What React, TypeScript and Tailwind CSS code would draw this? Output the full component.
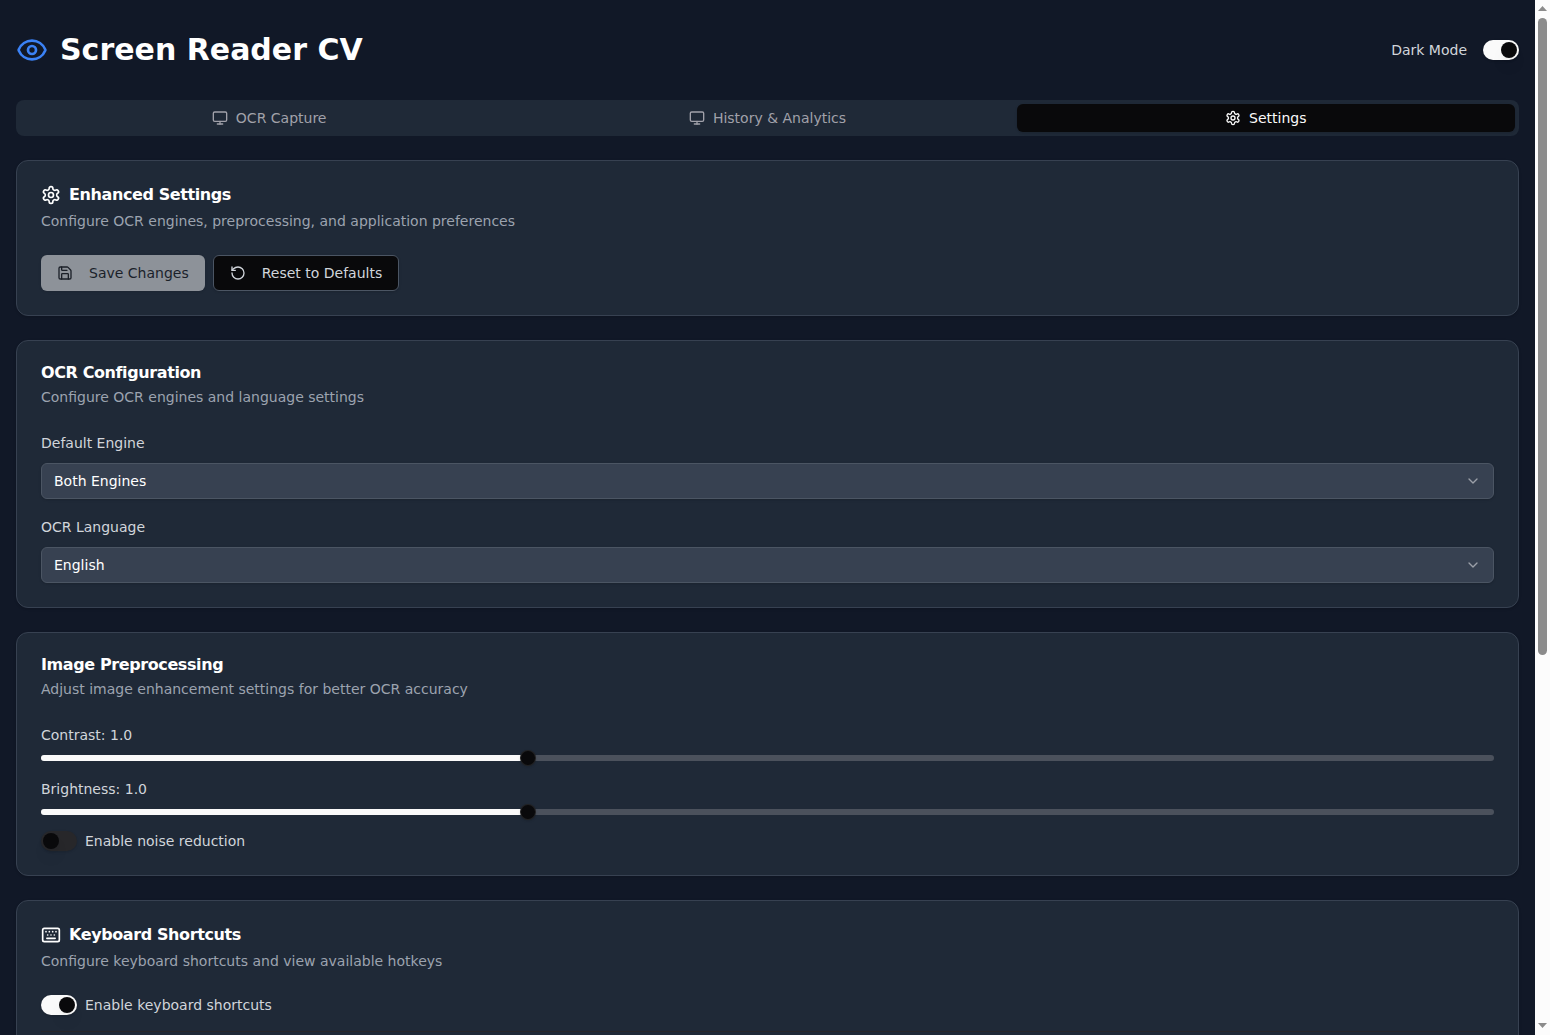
import React from "react";
import { Eye, Monitor, Save, RotateCcw, ChevronDown, Keyboard } from "lucide-react";

function Gear({ className }: { className: string }) {
  return (
    <svg className={className} viewBox="0 0 24 24" fill="none" stroke="currentColor" strokeWidth="2" strokeLinecap="round" strokeLinejoin="round">
      <path d="M12.22 2h-.44a2 2 0 0 0-2 2v.18a2 2 0 0 1-1 1.73l-.43.25a2 2 0 0 1-2 0l-.15-.08a2 2 0 0 0-2.73.73l-.22.38a2 2 0 0 0 .73 2.73l.15.1a2 2 0 0 1 1 1.72v.51a2 2 0 0 1-1 1.74l-.15.09a2 2 0 0 0-.73 2.73l.22.38a2 2 0 0 0 2.73.73l.15-.08a2 2 0 0 1 2 0l.43.25a2 2 0 0 1 1 1.73V20a2 2 0 0 0 2 2h.44a2 2 0 0 0 2-2v-.18a2 2 0 0 1 1-1.73l.43-.25a2 2 0 0 1 2 0l.15.08a2 2 0 0 0 2.73-.73l.22-.39a2 2 0 0 0-.73-2.73l-.15-.08a2 2 0 0 1-1-1.74v-.5a2 2 0 0 1 1-1.74l.15-.09a2 2 0 0 0 .73-2.73l-.22-.38a2 2 0 0 0-2.73-.73l-.15.08a2 2 0 0 1-2 0l-.43-.25a2 2 0 0 1-1-1.73V4a2 2 0 0 0-2-2z" />
      <circle cx="12" cy="12" r="3" />
    </svg>
  );
}

function Toggle({ on }: { on: boolean }) {
  return (
    <button
      className={
        on
          ? "flex h-5 w-9 shrink-0 items-center justify-end rounded-full border-2 border-transparent bg-[#fafafa] shadow-sm"
          : "flex h-5 w-9 shrink-0 items-center justify-start rounded-full border-2 border-transparent bg-[#27272a] shadow-sm"
      }
    >
      <span className="size-4 rounded-full bg-[#09090b] shadow-lg" />
    </button>
  );
}

function Card({ title, icon, description, children }: { title: string; icon?: React.ReactNode; description: string; children: React.ReactNode }) {
  return (
    <section className="shrink-0 rounded-xl border border-[#374151] bg-[#1f2937] p-6 shadow">
      <div className="flex flex-col gap-1.5">
        <h3 className="flex items-center gap-2 text-base leading-none font-semibold tracking-tight text-white">
          {icon}
          {title}
        </h3>
        <p className="text-sm text-[#9ca3af]">{description}</p>
      </div>
      <div className="flex flex-col gap-4 pt-6">{children}</div>
    </section>
  );
}

function SelectField({ label, value }: { label: string; value: string }) {
  return (
    <div className="flex flex-col gap-2">
      <label className="text-sm leading-6 text-[#d1d5db]">{label}</label>
      <button className="flex h-9 items-center justify-between rounded-md border border-[#4b5563] bg-[#374151] px-3 text-sm text-white shadow-sm">
        {value}
        <ChevronDown className="size-4 opacity-50" />
      </button>
    </div>
  );
}

function SliderField({ label, percent }: { label: string; percent: number }) {
  return (
    <div className="flex flex-col gap-2">
      <label className="text-sm leading-6 text-[#d1d5db]">{label}</label>
      <div className="relative h-1.5">
        <div className="h-full overflow-hidden rounded-full bg-[#4b515c]">
          <div className="h-full bg-[#fafafa]" style={{ width: `${percent}%` }} />
        </div>
        <span
          className="absolute -top-[5px] size-4 rounded-full border border-[#fafafa]/10 bg-[#09090b] shadow"
          style={{ left: `calc(${percent}% - ${(percent * 16) / 100}px)` }}
        />
      </div>
    </div>
  );
}

function SwitchRow({ label, on }: { label: string; on: boolean }) {
  return (
    <div className="flex h-5 items-center gap-2">
      <Toggle on={on} />
      <label className="text-sm text-[#d1d5db]">{label}</label>
    </div>
  );
}

const tab = "flex items-center justify-center gap-2 rounded-md text-sm";

export default function App() {
  return (
    <div className="flex h-[1035px] overflow-hidden bg-[#111827] font-['DejaVu_Sans',sans-serif]">
      <main className="flex min-w-0 flex-1 flex-col px-4 pt-8">
        <header className="mb-8 flex h-9 shrink-0 items-center justify-between">
          <div className="flex items-center gap-3">
            <Eye className="size-8 text-[#3b82f6]" />
            <h1 className="text-3xl font-bold text-white">Screen Reader CV</h1>
          </div>
          <div className="flex items-center gap-4">
            <span className="text-sm text-[#d1d5db]">Dark Mode</span>
            <Toggle on />
          </div>
        </header>

        <nav className="mb-6 grid h-9 shrink-0 grid-cols-3 rounded-lg bg-[#1f2937] p-1 text-[#a1a1aa]">
          <button className={tab}>
            <Monitor className="size-4" />
            OCR Capture
          </button>
          <button className={tab}>
            <Monitor className="size-4" />
            History &amp; Analytics
          </button>
          <button className="flex items-center justify-center gap-2 rounded-md bg-[#09090b] text-sm text-[#fafafa] shadow">
            <Gear className="size-4" />
            Settings
          </button>
        </nav>

        <div className="flex min-h-0 flex-1 flex-col gap-6">
          <Card title="Enhanced Settings" icon={<Gear className="size-5" />} description="Configure OCR engines, preprocessing, and application preferences">
            <div className="flex gap-2">
              <button className="flex h-9 items-center gap-4 rounded-md bg-[#fafafa] px-4 text-sm text-[#18181b] opacity-50 shadow">
                <Save className="size-4" />
                Save Changes
              </button>
              <button className="flex h-9 items-center gap-4 rounded-md border border-[#4b5563] bg-[#09090b] px-4 text-sm text-[#d1d5db] shadow-sm">
                <RotateCcw className="size-4" />
                Reset to Defaults
              </button>
            </div>
          </Card>

          <Card title="OCR Configuration" description="Configure OCR engines and language settings">
            <SelectField label="Default Engine" value="Both Engines" />
            <SelectField label="OCR Language" value="English" />
          </Card>

          <Card title="Image Preprocessing" description="Adjust image enhancement settings for better OCR accuracy">
            <SliderField label="Contrast: 1.0" percent={33.333} />
            <SliderField label="Brightness: 1.0" percent={33.333} />
            <SwitchRow label="Enable noise reduction" on={false} />
          </Card>

          <Card title="Keyboard Shortcuts" icon={<Keyboard className="size-5" />} description="Configure keyboard shortcuts and view available hotkeys">
            <SwitchRow label="Enable keyboard shortcuts" on />
            <div className="h-px bg-[#27272a]" />
          </Card>
        </div>
      </main>

      <aside className="flex w-[15px] shrink-0 flex-col items-center bg-[#fcfcfc]">
        <svg className="h-[18px] w-[15px] shrink-0" viewBox="0 0 15 18" fill="#8b8b8b">
          <path d="M3 11 7.5 6 12 11z" />
        </svg>
        <div className="h-[637px] w-[9px] rounded-full bg-[#8b8b8b]" />
        <svg className="mt-auto h-[18px] w-[15px] shrink-0" viewBox="0 0 15 18" fill="#8b8b8b">
          <path d="M3 6 7.5 11 12 6z" />
        </svg>
      </aside>
    </div>
  );
}
